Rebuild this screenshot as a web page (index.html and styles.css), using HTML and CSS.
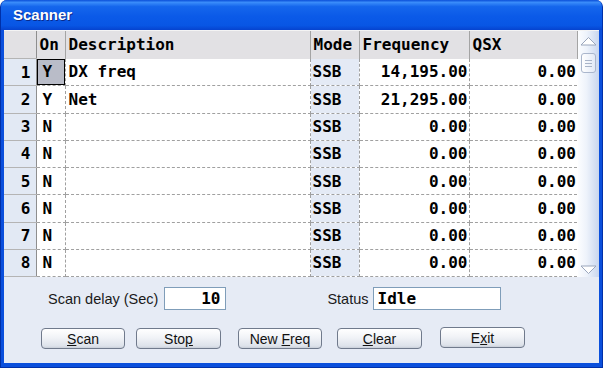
FILE: index.html
```html
<!DOCTYPE html>
<html lang="en">
<head>
    <meta charset="UTF-8">
    <title>Scanner</title>
    <link rel="stylesheet" href="styles.css">
</head>
<body>
    <div class="window">
        <div class="titlebar">Scanner</div>
        <div class="body">
            <div class="grid">
                <table class="sheet">
                    <colgroup>
                        <col class="c-num"><col class="c-on"><col class="c-desc"><col class="c-mode"><col class="c-freq"><col class="c-qsx">
                    </colgroup>
                    <thead>
                        <tr><th class="num"></th><th>On</th><th>Description</th><th>Mode</th><th>Frequency</th><th>QSX</th></tr>
                    </thead>
                    <tbody>
                        <tr><td class="num">1</td><td class="on selected">Y</td><td>DX freq</td><td class="mode">SSB</td><td class="amt">14,195.00</td><td class="amt">0.00</td></tr>
                        <tr><td class="num">2</td><td class="on">Y</td><td>Net</td><td class="mode">SSB</td><td class="amt">21,295.00</td><td class="amt">0.00</td></tr>
                        <tr><td class="num">3</td><td class="on">N</td><td></td><td class="mode">SSB</td><td class="amt">0.00</td><td class="amt">0.00</td></tr>
                        <tr><td class="num">4</td><td class="on">N</td><td></td><td class="mode">SSB</td><td class="amt">0.00</td><td class="amt">0.00</td></tr>
                        <tr><td class="num">5</td><td class="on">N</td><td></td><td class="mode">SSB</td><td class="amt">0.00</td><td class="amt">0.00</td></tr>
                        <tr><td class="num">6</td><td class="on">N</td><td></td><td class="mode">SSB</td><td class="amt">0.00</td><td class="amt">0.00</td></tr>
                        <tr><td class="num">7</td><td class="on">N</td><td></td><td class="mode">SSB</td><td class="amt">0.00</td><td class="amt">0.00</td></tr>
                        <tr><td class="num">8</td><td class="on">N</td><td></td><td class="mode">SSB</td><td class="amt">0.00</td><td class="amt">0.00</td></tr>
                    </tbody>
                </table>
                <div class="scrollbar">
                    <svg class="arrow" width="17" height="10" viewBox="0 0 17 10"><path d="M1 9 L8.5 1.5 L16 9 Z" fill="#fff" stroke="#9aa6bc"/></svg>
                    <div class="thumb"><span></span><span></span><span></span></div>
                    <div class="track"></div>
                    <svg class="arrow" width="17" height="10" viewBox="0 0 17 10"><path d="M1 1 L8.5 8.5 L16 1 Z" fill="#fff" stroke="#9aa6bc"/></svg>
                </div>
            </div>
            <div class="fields">
                <label class="lbl">Scan delay (Sec)</label>
                <div class="input delay">10</div>
                <label class="lbl status-lbl">Status</label>
                <div class="input status">Idle</div>
            </div>
            <div class="buttons">
                <button class="btn"><u>S</u>can</button>
                <button class="btn stop">Sto<u>p</u></button>
                <button class="btn newfreq">New <u>F</u>req</button>
                <button class="btn clear"><u>C</u>lear</button>
                <button class="btn exit">E<u>x</u>it</button>
            </div>
        </div>
    </div>
</body>
</html>
```

FILE: styles.css
```css
body {
    margin: 0;
    background: #fff;
    font-family: 'Liberation Sans', Arial, sans-serif;
}

.window {
    width: 603px;
    height: 368px;
    box-sizing: border-box;
    background: #0a4fdc;
    border: 1px solid #0030a8;
    border-top: none;
    border-radius: 7px 7px 0 0;
    overflow: hidden;
    display: flex;
    flex-direction: column;
}

.titlebar {
    height: 30px;
    line-height: 30px;
    padding-left: 12px;
    color: #fff;
    font-size: 15px;
    font-weight: bold;
    background: linear-gradient(#0b4fd8 0%, #3a8cfa 8%, #1566ec 22%, #0b5ae8 55%, #0856e4 85%, #0643cf 100%);
    text-shadow: 1px 1px 0 #0a2a8a;
}

.body {
    flex: 1;
    margin: 0 3px 4px 3px;
    background: #e6ebf5;
    display: flex;
    flex-direction: column;
}

.grid {
    display: flex;
    height: 246px;
    border-top: 1px solid #f4f4f4;
    background: #fff;
}

.sheet {
    width: 573px;
    table-layout: fixed;
    border-collapse: collapse;
    font-family: 'DejaVu Sans Mono', monospace;
    font-size: 16px;
    font-weight: bold;
    color: #000;
}

.c-num { width: 32px; }
.c-on { width: 29px; }
.c-desc { width: 245px; }
.c-mode { width: 49px; }
.c-freq { width: 110px; }
.c-qsx { width: 108px; }

.sheet th {
    height: 27px;
    padding: 0 3px;
    text-align: left;
    background: #e2e1e4;
    border-right: 1px solid #a4a4a4;
    font-weight: bold;
}

.sheet td {
    height: 26px;
    padding: 0 3px;
    white-space: nowrap;
    overflow: hidden;
    border-right: 1px dashed #a0a0a0;
    border-bottom: 1px dashed #a0a0a0;
}

.sheet .num {
    text-align: right;
    padding-right: 5px;
    background: #e2e9f4;
    border-right: 1px solid #8e8e8e;
    border-bottom: 1px solid #b4b4b4;
}

.sheet th.num {
    background: #e2e1e4;
}

.sheet .on {
    padding-left: 6px;
}

.sheet .selected {
    background: #b9bcc8;
    box-shadow: inset 0 0 0 1px #000;
}

.sheet .mode {
    padding-left: 2px;
    background: #e4eaf5;
}

.sheet .amt {
    text-align: right;
    padding-right: 1px;
}

.sheet td:last-child {
    border-right: none;
}

.scrollbar {
    width: 22px;
    display: flex;
    flex-direction: column;
    align-items: center;
    background: linear-gradient(to right, #fcfdff, #eef3fb 40%, #c9d6ee);
    padding: 5px 0 2px;
    box-sizing: border-box;
}

.thumb {
    margin-top: 7px;
    width: 15px;
    height: 20px;
    box-sizing: border-box;
    border: 1px solid #aab6cc;
    border-radius: 3px;
    background: linear-gradient(to right, #fff, #e2e9f6);
    display: flex;
    flex-direction: column;
    align-items: center;
    justify-content: center;
    gap: 2px;
}

.thumb span {
    width: 7px;
    height: 1px;
    background: #a9b4c8;
}

.track {
    flex: 1;
}

.fields {
    display: flex;
    align-items: center;
    margin-top: 10px;
    padding-left: 44px;
    height: 23px;
    font-size: 14.5px;
}

.lbl {
    color: #1a1a1a;
}

.input {
    height: 23px;
    box-sizing: border-box;
    border: 1px solid #7f9db9;
    background: #fff;
    font-family: 'DejaVu Sans Mono', monospace;
    font-size: 16px;
    font-weight: bold;
    line-height: 21px;
}

.delay {
    width: 62px;
    margin-left: 6px;
    text-align: right;
    padding-right: 5px;
}

.status-lbl {
    margin-left: 101px;
}

.status {
    width: 128px;
    margin-left: 4px;
    padding-left: 4px;
}

.buttons {
    display: flex;
    margin-top: 18px;
    padding-left: 37px;
}

.btn {
    width: 84px;
    height: 21px;
    padding: 0;
    font-family: 'Liberation Sans', Arial, sans-serif;
    font-size: 14px;
    color: #111;
    border: 1px solid #707a8c;
    border-radius: 4px;
    background: linear-gradient(#ffffff, #f1f3f7 45%, #dde2ea 90%, #c9cfd9);
}

.stop { width: 85px; margin-left: 11px; }
.newfreq { margin-left: 17px; }
.clear { width: 85px; margin-left: 15px; }
.exit { width: 85px; margin-left: 18px; margin-top: -1px; }
```
